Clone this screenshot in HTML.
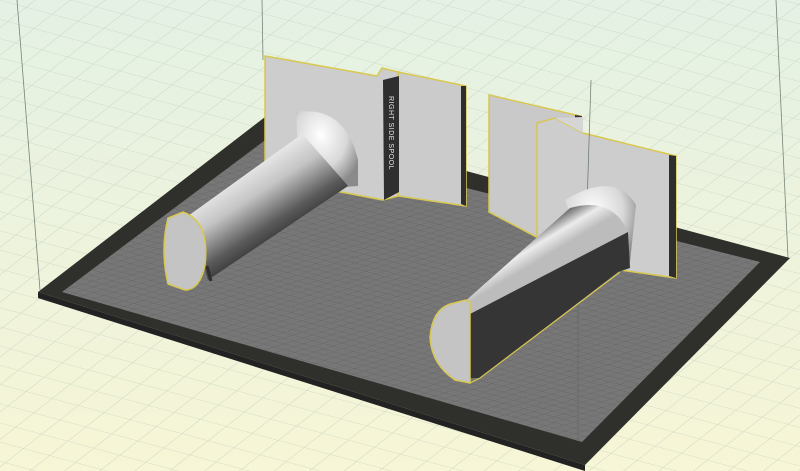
<!DOCTYPE html>
<html><head><meta charset="utf-8"><style>
html,body{margin:0;padding:0;width:800px;height:471px;overflow:hidden;background:#eef5e2}
svg{display:block}
</style></head><body>
<svg width="800" height="471" viewBox="0 0 800 471" xmlns="http://www.w3.org/2000/svg">
<defs>
<linearGradient id="bg" x1="0" y1="0" x2="0" y2="1">
<stop offset="0" stop-color="#e4f1e4"/><stop offset="0.5" stop-color="#edf3dd"/><stop offset="1" stop-color="#f7f6d6"/>
</linearGradient>
<pattern id="g1" width="26" height="26" patternUnits="userSpaceOnUse" patternTransform="matrix(1,0.27,-0.7,0.55,0,0)">
<path d="M0 0H26M0 0V26" stroke="#c3d0bf" stroke-width="1.2" fill="none"/>
</pattern>
<pattern id="g2" width="10" height="10" patternUnits="userSpaceOnUse" patternTransform="matrix(1,0.27,-0.95,0.3,0,0)">
<path d="M0 0H10M0 0V10" stroke="#545454" stroke-width="0.9" fill="none"/>
</pattern>
<linearGradient id="cylA" gradientUnits="userSpaceOnUse" x1="238" y1="168" x2="282" y2="236">
<stop offset="0" stop-color="#f0f0f0"/><stop offset="0.4" stop-color="#c4c4c4"/><stop offset="0.8" stop-color="#5a5a5a"/><stop offset="1" stop-color="#3a3a3a"/>
</linearGradient>
<linearGradient id="cylB" gradientUnits="userSpaceOnUse" x1="500" y1="250" x2="515" y2="275">
<stop offset="0" stop-color="#6a6a6a"/><stop offset="0.5" stop-color="#ececec"/><stop offset="1" stop-color="#bcbcbc"/>
</linearGradient>
<radialGradient id="fl" cx="0.4" cy="0.3" r="0.7">
<stop offset="0" stop-color="#ffffff"/><stop offset="0.6" stop-color="#d8d8d8"/><stop offset="1" stop-color="#8a8a8a"/>
</radialGradient>
</defs>
<rect width="800" height="471" fill="url(#bg)"/>
<rect width="800" height="471" fill="url(#g1)" opacity="0.8"/>
<!-- build plate -->
<polygon points="38,292 265,117 790,258 585,465" fill="#2f302c"/>
<polygon points="38,292 585,465 585,471 38,298" fill="#222"/>
<polygon points="62,292 268,138 760,262 582,442" fill="#777"/>
<polygon points="62,292 268,138 760,262 582,442" fill="url(#g2)" opacity="0.7"/>
<!-- box lines -->
<g stroke="#5a6a60" stroke-width="0.8" fill="none" opacity="0.8">
<line x1="17" y1="0" x2="40" y2="290"/>
<line x1="262" y1="0" x2="263" y2="60"/>
<line x1="776" y1="0" x2="788" y2="258"/>
<line x1="578" y1="300" x2="578" y2="440"/>
</g>
<!-- panel C (back right) -->
<polygon points="489,95 580,116 580,260 489,212" fill="#c9c9c9" stroke="#d8c850" stroke-width="1.5"/>
<polygon points="575,115 582,116 582,135 575,132" fill="#333"/>
<!-- panel B -->
<polygon points="398,72 466,86 466,206 398,196" fill="#cbcbcb" stroke="#d8c850" stroke-width="1.5"/>
<polygon points="461,86 466,86 466,206 461,204" fill="#2e2e2e"/>
<!-- panel A -->
<polygon points="265,56 377,76 382,68 398,72 398,196 383,200 330,190 265,178" fill="#cdcdcd" stroke="#d8c850" stroke-width="1.5"/>
<polygon points="383,80 399,76 399,192 384,200" fill="#2f2f2f"/>
<text x="0" y="0" transform="translate(389,96) rotate(90)" font-family="Liberation Sans, sans-serif" font-size="7" fill="#e8e8e8" letter-spacing="0.5">RIGHT SIDE SPOOL</text>
<!-- spool A -->
<path d="M296,112 Q345,105 358,160 L358,186 L300,190 Z" fill="url(#fl)"/>
<path d="M188,216 L302,134 Q330,165 348,186 L208,280 Z" fill="url(#cylA)"/>
<path d="M183,212 Q210,222 205,265 Q200,290 185,290 L168,284 Q160,250 168,218 Z" fill="#c4c4c4" stroke="#d8c850" stroke-width="1.5"/>
<path d="M207,266 L211,281" stroke="#2e2e2e" stroke-width="3"/>
<!-- panel D -->
<polygon points="537,123 555,118 583,133 676,156 676,278 620,270 537,255" fill="#cdcdcd" stroke="#d8c850" stroke-width="1.5"/>
<polygon points="669,155 676,156 676,278 669,276" fill="#2e2e2e"/>
<polygon points="555,118 583,117 583,133" fill="#d5d5d5"/>
<line x1="591" y1="80" x2="584" y2="300" stroke="#5a6a60" stroke-width="0.8" opacity="0.8"/>
<!-- spool B -->
<path d="M565,200 Q615,170 636,205 L630,262 L590,270 Z" fill="url(#fl)"/>
<path d="M462,304 L570,208 Q612,196 628,232 L628,262 L470,330 Z" fill="url(#cylB)"/>
<polygon points="470,314 628,232 630,268 618,272 480,378 470,378" fill="#353535"/>
<path d="M466,300 L470,302 L470,383 L455,380 Q432,365 430,338 Q432,310 450,304 Z" fill="#c4c4c4" stroke="#d8c850" stroke-width="1.5"/>
<path d="M470,383 L480,378 L620,272" stroke="#d8c850" stroke-width="1.2" fill="none"/>
</svg>
</body></html>
